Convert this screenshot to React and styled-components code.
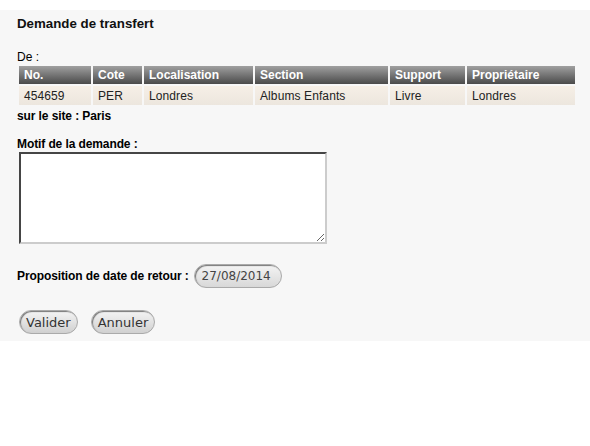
import React from 'react';
import styled, { createGlobalStyle } from 'styled-components';

const Global = createGlobalStyle`
  body {
    margin: 0;
    background: #fff;
    font-family: "Liberation Sans", Arial, sans-serif;
    font-size: 12px;
    color: #000;
  }
`;

const columns = ['No.', 'Cote', 'Localisation', 'Section', 'Support', 'Propriétaire'];
const widths = [72, 49, 109, 133, 75, 108];
const row = ['454659', 'PER', 'Londres', 'Albums Enfants', 'Livre', 'Londres'];

function App() {
  return (
    <>
      <Global />
      <Panel>
        <Title>Demande de transfert</Title>
        <Label>De :</Label>
        <Table>
          <colgroup>
            {widths.map((w, i) => (
              <col key={i} style={{ width: w }} />
            ))}
          </colgroup>
          <thead>
            <tr>
              {columns.map((c) => (
                <Th key={c}>{c}</Th>
              ))}
            </tr>
          </thead>
          <tbody>
            <tr>
              {row.map((v, i) => (
                <Td key={i}>{v}</Td>
              ))}
            </tr>
          </tbody>
        </Table>
        <Strong $top={2}>sur le site : Paris</Strong>
        <Strong $top={14}>Motif de la demande :</Strong>
        <TextArea />
        <DateRow>
          <Strong>Proposition de date de retour :</Strong>
          <DateInput defaultValue="27/08/2014" />
        </DateRow>
        <Buttons>
          <Button>Valider</Button>
          <Button>Annuler</Button>
        </Buttons>
      </Panel>
    </>
  );
}

const Panel = styled.div`
  margin-top: 10px;
  background: #f7f7f7;
  padding: 7px 17px;
  height: 317px;
`;

const Title = styled.div`
  font-size: 13.3px;
  font-weight: bold;
  line-height: 16px;
  color: #111;
  margin-top: -1px;
`;

const Label = styled.div`
  margin-top: 18px;
  line-height: 14px;
`;

const Table = styled.table`
  border-spacing: 2px;
  table-layout: fixed;
  width: 560px;
  margin: 0;
`;

const Th = styled.th`
  height: 18px;
  padding: 0 5px;
  text-align: left;
  font-weight: bold;
  color: #fff;
  background: linear-gradient(#a0a0a0, #4a4a4a);
`;

const Td = styled.td`
  height: 19px;
  padding: 0 5px;
  color: #222;
  letter-spacing: 0.1px;
  background: linear-gradient(#f6efe6, #ece6de);
`;

const Strong = styled.div`
  font-weight: bold;
  line-height: 14px;
  letter-spacing: -0.1px;
  margin-top: ${(p) => p.$top || 0}px;
`;

const TextArea = styled.textarea`
  display: block;
  margin: 1px 0 0 2px;
  width: 308px;
  height: 92px;
  box-sizing: border-box;
  border: 2px inset #ccc;
  border-top-color: #999;
  border-left-color: #999;
  background: #fff;
  resize: both;
`;

const DateRow = styled.div`
  display: flex;
  align-items: center;
  gap: 5px;
  margin-top: 20px;
`;

const DateInput = styled.input`
  width: 88px;
  height: 24px;
  box-sizing: border-box;
  border: 1px solid #aaa;
  border-radius: 12px;
  box-shadow: inset 1px 1px 1px #777;
  background: linear-gradient(#f4f4f4, #d8d8d8);
  font-family: "DejaVu Sans", sans-serif;
  font-size: 12px;
  color: #444;
  padding: 0 6px 0 7px;
`;

const Buttons = styled.div`
  display: flex;
  gap: 13px;
  margin-top: 22px;
  margin-left: 2px;
`;

const Button = styled.button`
  height: 24px;
  padding: 0 6px;
  border: 1px solid #aaa;
  border-radius: 12px;
  box-shadow: inset 1px 1px 1px #777;
  background: linear-gradient(#f4f4f4, #d0d0d0);
  font-family: "DejaVu Sans", sans-serif;
  font-size: 13px;
  color: #333;
`;

export default App;
